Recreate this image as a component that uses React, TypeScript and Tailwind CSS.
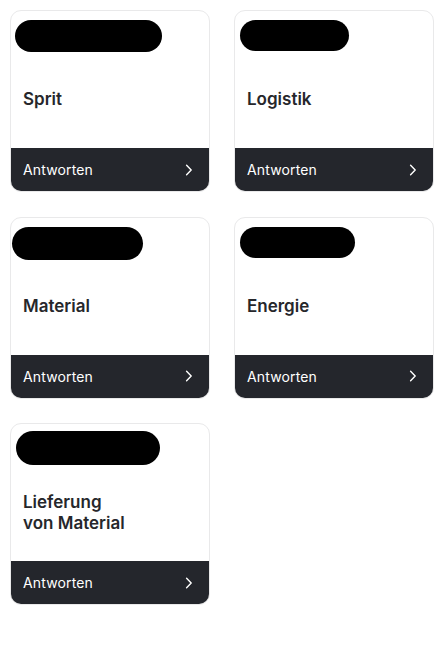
import React from 'react';

interface CardProps {
  title: string[];
  blob: { left: number; width: number; top: number; height: number };
}

const cards: CardProps[] = [
  { title: ['Sprit'], blob: { left: 5, width: 147, top: 10, height: 32 } },
  { title: ['Logistik'], blob: { left: 6, width: 109, top: 10, height: 31 } },
  { title: ['Material'], blob: { left: 2, width: 131, top: 10, height: 33 } },
  { title: ['Energie'], blob: { left: 6, width: 115, top: 10, height: 31 } },
  { title: ['Lieferung', 'von Material'], blob: { left: 6, width: 144, top: 8, height: 34 } },
];

const Chevron = () => (
  <svg width="8" height="12" viewBox="0 0 8 12" fill="none">
    <path d="M1.6 1.3L6.2 6L1.6 10.7" stroke="white" strokeWidth="1.4" strokeLinecap="round" strokeLinejoin="round" />
  </svg>
);

const Card: React.FC<CardProps> = ({ title, blob }) => (
  <div className="w-[200px] h-[182px] bg-white border border-[#e9e9ea] rounded-[11px] overflow-hidden flex flex-col">
    <div className="h-[137px] shrink-0 flex flex-col">
      <div className="h-[42px] shrink-0 relative">
        {/* redacted marker stroke */}
        <div
          className="absolute bg-black rounded-full"
          style={{ left: blob.left - 1, width: blob.width, top: blob.top - 1, height: blob.height }}
        />
      </div>
      <div className="flex-1 flex items-center px-[12px] pb-[2px]">
        <div className="text-[17px] leading-[21px] font-semibold text-[#26272b]">
          {title.map((t) => (
            <div key={t}>{t}</div>
          ))}
        </div>
      </div>
    </div>
    <div className="flex-1 bg-[#24262c] flex items-center justify-between pl-[12px] pr-[16px]">
      <span className="text-[14px] text-white tracking-[0.15px]">Antworten</span>
      <Chevron />
    </div>
  </div>
);

export default function App() {
  return (
    <div className="w-[439px] h-[650px] bg-white pt-[10px] pl-[10px]" style={{ fontFamily: 'Inter, "Noto Sans", sans-serif' }}>
      <div className="grid grid-cols-[200px_200px] gap-x-[24px] gap-y-[24.5px]">
        {cards.map((c) => (
          <Card key={c.title.join(' ')} {...c} />
        ))}
      </div>
    </div>
  );
}
